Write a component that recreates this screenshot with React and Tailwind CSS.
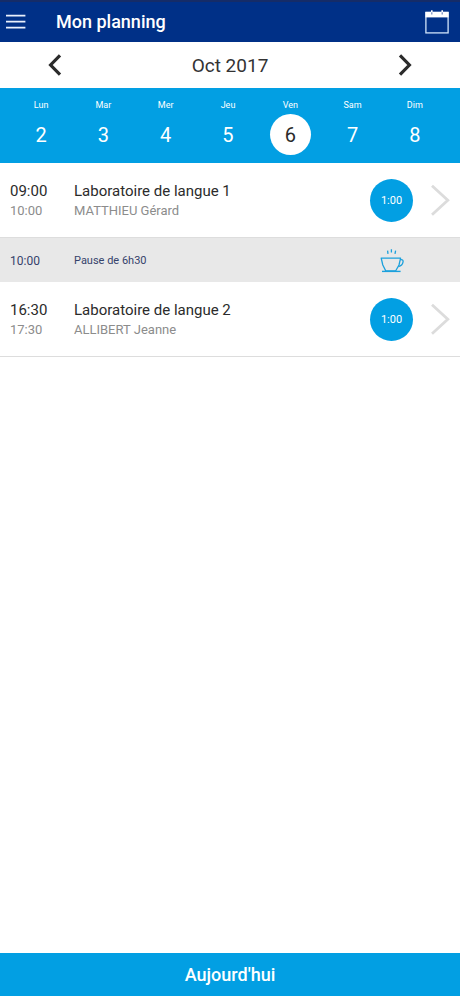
const days = [
  { name: 'Lun', date: 2 },
  { name: 'Mar', date: 3 },
  { name: 'Mer', date: 4 },
  { name: 'Jeu', date: 5 },
  { name: 'Ven', date: 6, selected: true },
  { name: 'Sam', date: 7 },
  { name: 'Dim', date: 8 },
];

function MenuIcon() {
  return (
    <svg width="20" height="16" viewBox="0 0 20 16" fill="none" stroke="#e9f0fc" strokeWidth="1.8" aria-hidden="true">
      <path d="M0 1.6h19.4M0 7.6h19.4M0 13.6h19.4" />
    </svg>
  );
}

function CalendarIcon() {
  return (
    <svg width="24" height="24" viewBox="0 0 24 24" fill="none" aria-hidden="true">
      <rect x="0.9" y="2.5" width="22.2" height="20.4" stroke="#cfe3fa" strokeWidth="1.3" />
      <path d="M0.4 1.8h23.2v5.6H0.4z" fill="#fff" />
      <path d="M6.8 0.2v4.2M17.2 0.2v4.2" stroke="#fff" strokeWidth="1.6" />
      <path d="M6.8 2.2v2.4M17.2 2.2v2.4" stroke="#6f87bd" strokeWidth="1.2" />
    </svg>
  );
}

function MonthArrow({ next }) {
  return (
    <svg width="14" height="22" viewBox="0 0 14 22" fill="none" stroke="#2b2b2b" strokeWidth="3.2" aria-hidden="true">
      <path d={next ? 'M2 1.4 11.4 11 2 20.6' : 'M12 1.4 2.6 11l9.4 9.6'} />
    </svg>
  );
}

function RowArrow() {
  return (
    <svg width="20" height="32" viewBox="0 0 20 32" fill="none" stroke="#dcdcdc" strokeWidth="2.8" aria-hidden="true">
      <path d="M2 1.8 17.8 16.3 2 30.8" />
    </svg>
  );
}

function CoffeeIcon() {
  return (
    <svg width="24" height="25" viewBox="0 0 24 25" fill="none" stroke="#1ba0dc" strokeWidth="1.3" strokeLinejoin="round" aria-hidden="true">
      <path d="M7.6 2.6 8 5.8M11.4 1.2v3.4M15.6 2.6l-.6 3.2" />
      <path d="M1.2 10.2h19.4L19 17l-3.4 6H5.8l-3-6z" />
      <path d="M20.4 12c1.8-.8 3 .2 2.6 2.2-.4 2.4-2 3.8-4.6 4.4" />
      <path d="M2 23.4h18.6" strokeWidth="1.4" />
    </svg>
  );
}

function Lesson({ start, end, title, teacher, duration }) {
  return (
    <li>
      <a href="#" className="flex h-[74px] items-center px-2.5">
        <div className="w-16 shrink-0 pt-0.5">
          <div className="text-[15px] leading-5 text-[#2b2b2b]">{start}</div>
          <div className="text-[13px] leading-5 text-[#8c8c8c]">{end}</div>
        </div>
        <div className="flex-1 pt-0.5">
          <div className="text-[15px] leading-5 text-[#2b2b2b]">{title}</div>
          <div className="text-[13px] leading-5 text-[#8c8c8c]">{teacher}</div>
        </div>
        <div className="mr-[17px] flex size-[43px] shrink-0 items-center justify-center rounded-full bg-[#029fe3] pt-0.5 text-[11px] text-white">
          {duration}
        </div>
        <RowArrow />
      </a>
    </li>
  );
}

export default function App() {
  return (
    <div className="flex min-h-screen flex-col bg-white font-['Roboto',sans-serif]">
      <header className="flex h-[42px] items-center border-t-2 border-[#152c68] bg-[#003087] pr-[11px] pl-1.5 text-white">
        <button type="button" aria-label="Menu" className="flex w-[50px] items-center">
          <MenuIcon />
        </button>
        <h1 className="flex-1 text-lg font-medium">Mon planning</h1>
        <button type="button" aria-label="Calendrier">
          <CalendarIcon />
        </button>
      </header>

      <div className="flex h-[46px] items-center justify-between px-12">
        <button type="button" aria-label="Mois précédent">
          <MonthArrow />
        </button>
        <h2 className="pt-0.5 text-[19px] text-[#333333]">Oct 2017</h2>
        <button type="button" aria-label="Mois suivant">
          <MonthArrow next />
        </button>
      </div>

      <div className="grid h-[75px] grid-cols-7 bg-[#029fe3] pt-2.5 pr-3.5 pl-2.5 text-white">
        {days.map((day) => (
          <button key={day.name} type="button" aria-pressed={Boolean(day.selected)} className="flex flex-col items-center">
            <span className="h-4 text-[9px] leading-[14px]">{day.name}</span>
            <span
              className={
                day.selected
                  ? 'flex size-[41px] items-center justify-center rounded-full bg-white text-[20px] text-[#2b2b2b]'
                  : 'flex size-[41px] items-center justify-center rounded-full text-[20px]'
              }
            >
              {day.date}
            </span>
          </button>
        ))}
      </div>

      <ul className="border-b border-[#dddddd]">
        <Lesson start="09:00" end="10:00" title="Laboratoire de langue 1" teacher="MATTHIEU Gérard" duration="1:00" />
        <li className="flex h-[45px] items-center border-t border-[#dddddd] bg-[#e8e8e8] pr-14 pl-2.5 text-[#35426b]">
          <div className="w-16 pt-0.5 text-xs">10:00</div>
          <div className="flex-1 pt-0.5 text-[11px]">Pause de 6h30</div>
          <CoffeeIcon />
        </li>
        <Lesson start="16:30" end="17:30" title="Laboratoire de langue 2" teacher="ALLIBERT Jeanne" duration="1:00" />
      </ul>

      <button type="button" className="mt-auto h-[43px] bg-[#029fe3] text-lg font-medium text-white">
        Aujourd'hui
      </button>
    </div>
  );
}
